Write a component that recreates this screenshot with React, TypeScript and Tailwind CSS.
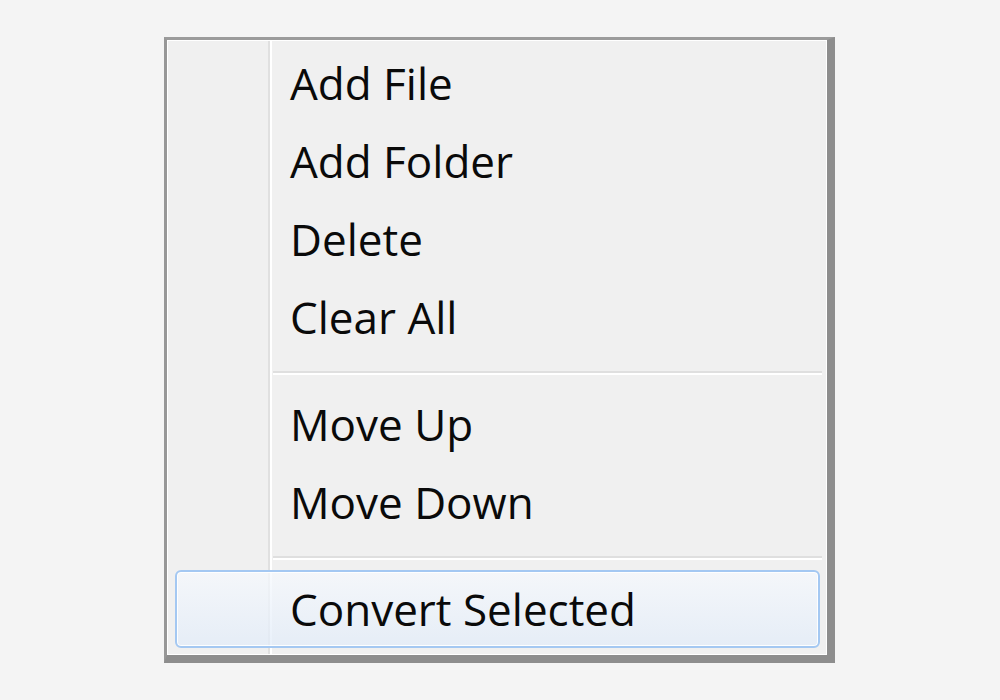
const items: (string | null)[] = [
  "Add File",
  "Add Folder",
  "Delete",
  "Clear All",
  null,
  "Move Up",
  "Move Down",
  null,
];

function Separator() {
  return (
    <div className="h-[29px] pt-[15px] pl-[105px] pr-[4px]">
      <div className="h-[2px] bg-[#dfdfdf]" />
      <div className="h-[2px] bg-white" />
    </div>
  );
}

export default function App() {
  return (
    <div
      className="min-h-screen bg-[#f4f4f4] pt-[37px] pl-[164px]"
      style={{ fontFamily: '"Open Sans", "Noto Sans", sans-serif' }}
    >
      <div className="w-[671px] border-l-[3px] border-t-[3px] border-r-[8px] border-b-[8px] border-l-[#979797] border-t-[#9b9b9b] border-r-[#8d8d8d] border-b-[#8d8d8d]">
        <div className="border border-white bg-[#f0f0f0] bg-[linear-gradient(to_right,transparent_100px,#e0e0e0_100px,#e0e0e0_102px,#ffffff_102px,#ffffff_104px,transparent_104px)] pt-[3px] pb-[6px]">
          {items.map((label, i) =>
            label === null ? (
              <Separator key={i} />
            ) : (
              <div
                key={i}
                className="h-[78px] leading-[78px] pl-[122px] text-[44px] font-medium text-[#0a0a0a]"
              >
                {label}
              </div>
            )
          )}
          <div className="ml-[7px] mr-[6px] h-[78px] rounded-[6px] border-2 border-[#a4c8f2] bg-[linear-gradient(to_bottom,rgba(246,249,253,0.75),rgba(226,236,249,0.75))] shadow-[inset_0_0_0_1px_rgba(255,255,255,0.9)] leading-[74px] pl-[113px] text-[44px] font-medium text-[#0a0a0a]">
            Convert Selected
          </div>
        </div>
      </div>
    </div>
  );
}
